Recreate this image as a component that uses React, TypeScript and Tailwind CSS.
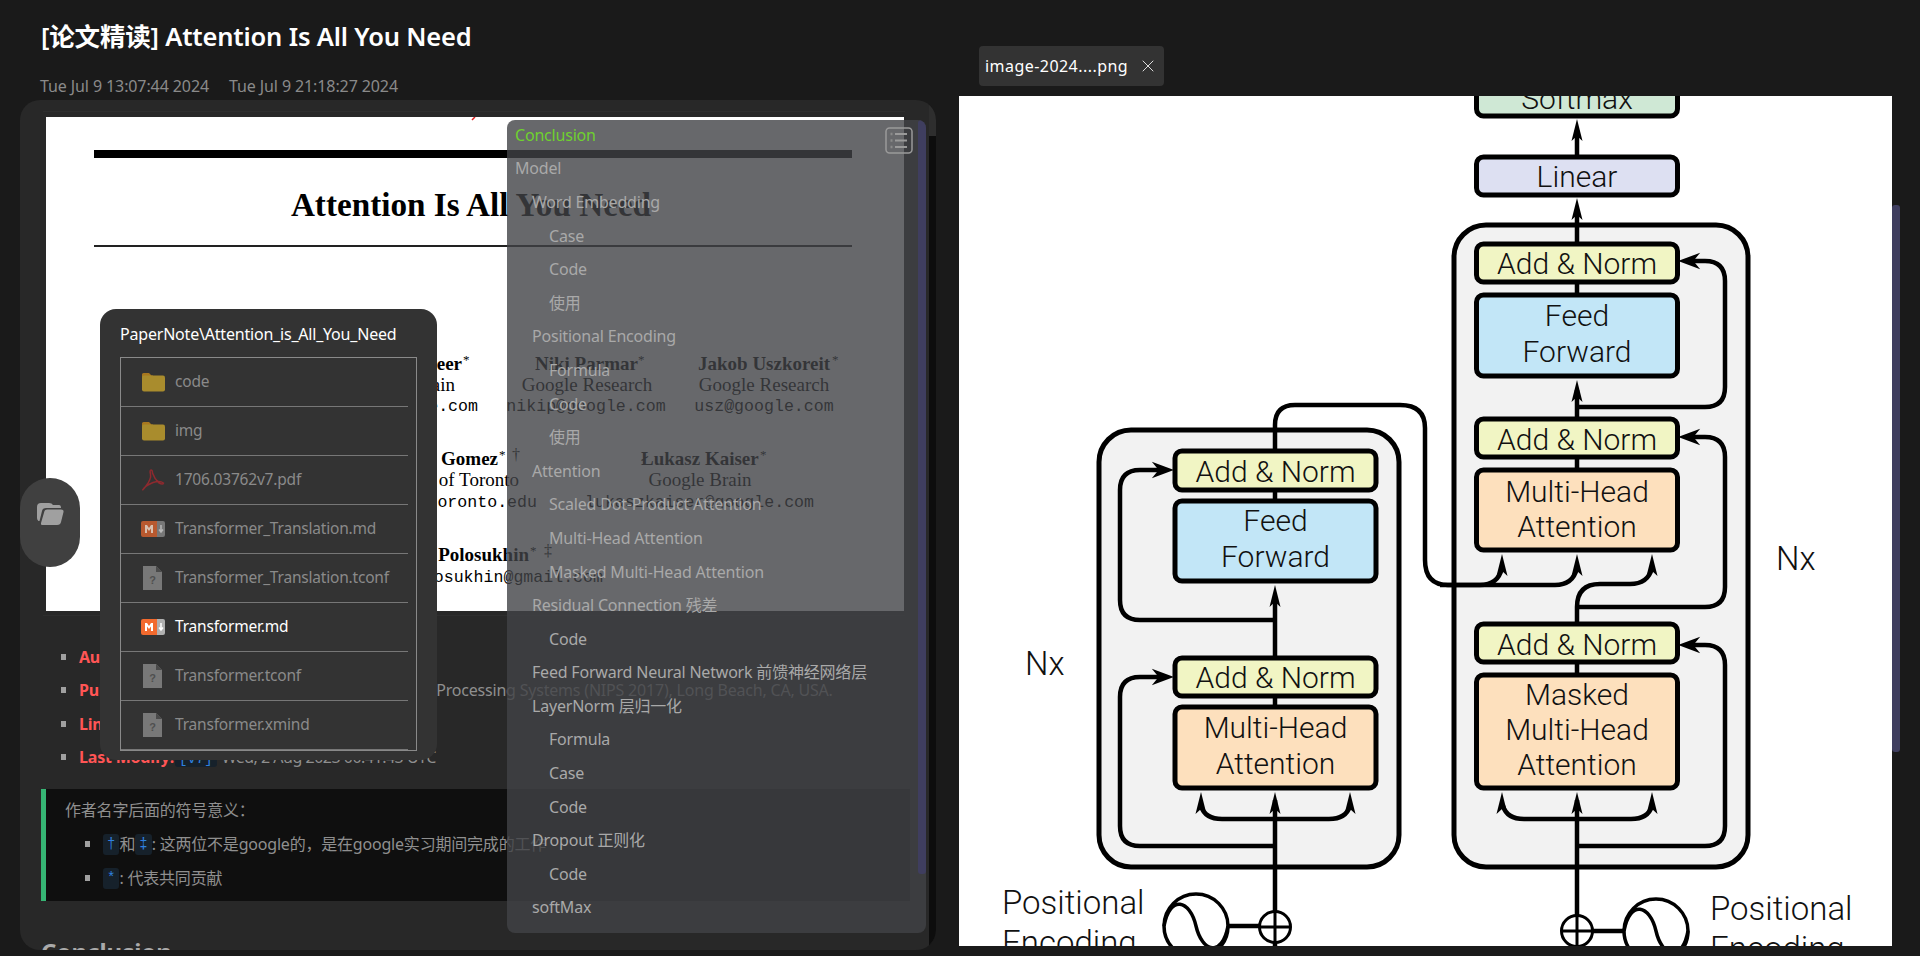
import { X } from 'lucide-react'

const UI_FONT = "font-['Noto_Sans','Noto_Sans_CJK_SC',sans-serif]"
const UI_TEXT = 'text-[16px] tracking-[-0.2px]'

type TocRow = { label: string; level: 1 | 2 | 3; active?: boolean }

const TOC: TocRow[] = [
  { label: 'Conclusion', level: 1, active: true },
  { label: 'Model', level: 1 },
  { label: 'Word Embedding', level: 2 },
  { label: 'Case', level: 3 },
  { label: 'Code', level: 3 },
  { label: '使用', level: 3 },
  { label: 'Positional Encoding', level: 2 },
  { label: 'Formula', level: 3 },
  { label: 'Code', level: 3 },
  { label: '使用', level: 3 },
  { label: 'Attention', level: 2 },
  { label: 'Scaled Dot-Product Attention', level: 3 },
  { label: 'Multi-Head Attention', level: 3 },
  { label: 'Masked Multi-Head Attention', level: 3 },
  { label: 'Residual Connection 残差', level: 2 },
  { label: 'Code', level: 3 },
  { label: 'Feed Forward Neural Network 前馈神经网络层', level: 2 },
  { label: 'LayerNorm 层归一化', level: 2 },
  { label: 'Formula', level: 3 },
  { label: 'Case', level: 3 },
  { label: 'Code', level: 3 },
  { label: 'Dropout 正则化', level: 2 },
  { label: 'Code', level: 3 },
  { label: 'softMax', level: 2 }
]

type FileKind = 'folder' | 'pdf' | 'md' | 'unknown'

const FILES: { name: string; kind: FileKind; active?: boolean }[] = [
  { name: 'code', kind: 'folder' },
  { name: 'img', kind: 'folder' },
  { name: '1706.03762v7.pdf', kind: 'pdf' },
  { name: 'Transformer_Translation.md', kind: 'md' },
  { name: 'Transformer_Translation.tconf', kind: 'unknown' },
  { name: 'Transformer.md', kind: 'md', active: true },
  { name: 'Transformer.tconf', kind: 'unknown' },
  { name: 'Transformer.xmind', kind: 'unknown' }
]

function FileIcon({ kind, active }: { kind: FileKind; active?: boolean }) {
  if (kind === 'folder') {
    return (
      <svg width="24" height="20" viewBox="0 0 24 20">
        <path d="M1 4V2.5Q1 1 2.5 1H8L10.5 3.5H12V6H1Z" fill="#a8781f" />
        <rect x="1" y="3.5" width="23" height="16" rx="2" fill="#a98c2d" />
      </svg>
    )
  }
  if (kind === 'pdf') {
    return (
      <svg width="24" height="24" viewBox="0 0 24 24" fill="none" stroke="#8e2a2f" strokeWidth="1.5">
        <path d="M10 2Q8.5 2 9.5 6Q10.5 11 5 18Q1 23 2 21.5Q4 18 12 14.5Q19 12.5 22.5 15Q22 17 18 15Q13.5 11 11.5 5Q11.5 2 10 2Z" />
      </svg>
    )
  }
  if (kind === 'md') {
    return (
      <svg width="24" height="16" viewBox="0 0 24 16">
        <path d="M2 0H16V16H2Q0 16 0 14V2Q0 0 2 0Z" fill={active ? '#f26a2e' : '#b8592f'} />
        <path d="M16 0H22Q24 0 24 2V14Q24 16 22 16H16Z" fill={active ? '#b0b0b0' : '#777777'} />
        <path d="M4 12V4H6L8 7L10 4H12V12H10V7.5L8 10L6 7.5V12Z" fill={active ? '#ffffff' : '#d8c0b0'} />
        <path d="M20 4V10M18 8.5L20 11L22 8.5" stroke={active ? '#ffffff' : '#b8b8b8'} strokeWidth="1.5" fill="none" />
      </svg>
    )
  }
  return (
    <svg width="24" height="24" viewBox="0 0 24 24">
      <path d="M2 0H15L21 6V24H2Z" fill="#787878" />
      <path d="M15 0L21 6H15Z" fill="#4a4a4a" />
      <text x="11.5" y="18" textAnchor="middle" fontSize="11" fontWeight="700" fill="#4f4f4f" fontFamily="Liberation Sans, sans-serif">
        ?
      </text>
    </svg>
  )
}

function Star({ x, y, mark = '*', size = 13 }: { x: number; y: number; mark?: string; size?: number }) {
  return (
    <text x={x} y={y - 6} fontSize={size} fontWeight="400">
      {mark}
    </text>
  )
}

/** The first page of the paper, as it sits in the note. */
function PaperPage() {
  const serif = 'Liberation Serif, serif'
  const mono = 'Liberation Mono, monospace'
  return (
    <svg width="858" height="494" viewBox="46 117 858 494" className="block bg-white">
      <path d="M472 120L475 117" stroke="#e02020" strokeWidth="1.5" />
      <rect x="94" y="150" width="758" height="8" fill="#000" />
      <rect x="94" y="245" width="758" height="2" fill="#222" />
      <text x="471" y="216" textAnchor="middle" fontFamily={serif} fontWeight="700" fontSize="33.2" fill="#000">
        Attention Is All You Need
      </text>
      <g fontFamily={serif} fontSize="19" fill="#000">
        <g fontWeight="700">
          <text x="462" y="370" textAnchor="end">Noam Shazeer</text>
          <text x="535" y="370">Niki Parmar</text>
          <text x="698" y="370">Jakob Uszkoreit</text>
          <text x="498" y="465" textAnchor="end">Aidan N. Gomez</text>
          <text x="641" y="465">Łukasz Kaiser</text>
          <text x="529" y="561" textAnchor="end">Illia Polosukhin</text>
        </g>
        <Star x={463} y={370} />
        <Star x={638} y={370} />
        <Star x={832} y={370} />
        <Star x={499} y={465} />
        <Star x={512} y={466} mark="†" size={16} />
        <Star x={760} y={465} />
        <Star x={530} y={561} />
        <Star x={544} y={562} mark="‡" size={16} />
        <text x="455" y="391" textAnchor="end">Google Brain</text>
        <text x="587" y="391" textAnchor="middle">Google Research</text>
        <text x="764" y="391" textAnchor="middle">Google Research</text>
        <text x="519" y="486" textAnchor="end">University of Toronto</text>
        <text x="700" y="486" textAnchor="middle">Google Brain</text>
      </g>
      <g fontFamily={mono} fontSize="16.6" fill="#000">
        <text x="478" y="411" textAnchor="end">noam@google.com</text>
        <text x="586" y="411" textAnchor="middle">nikip@google.com</text>
        <text x="764" y="411" textAnchor="middle">usz@google.com</text>
        <text x="537" y="507" textAnchor="end">aidan@cs.toronto.edu</text>
        <text x="814" y="507" textAnchor="end">lukaszkaiser@google.com</text>
        <text x="603" y="582" textAnchor="end">illia.polosukhin@gmail.com</text>
      </g>
    </svg>
  )
}

function Box({ x, y, w = 201, h, fill, lines }: { x: number; y: number; w?: number; h: number; fill: string; lines: [string, number][] }) {
  return (
    <g>
      <rect x={x} y={y} width={w} height={h} rx="7" fill={fill} stroke="#000" strokeWidth="5" />
      {lines.map(([label, base]) => (
        <text key={label} x={x + w / 2} y={base + 1} textAnchor="middle" fontSize="30" fontWeight="300" fill="#111">
          {label}
        </text>
      ))}
    </g>
  )
}

// Arrow head pointing at the tip, with the notch the paper's figure has.
function Up({ x, y }: { x: number; y: number }) {
  return <path d={`M${x} ${y}L${x + 5.5} ${y + 22}L${x} ${y + 17}L${x - 5.5} ${y + 22}Z`} fill="#000" />
}
function Left({ x, y }: { x: number; y: number }) {
  return <path d={`M${x} ${y}L${x + 16} ${y - 6}L${x + 11} ${y}L${x + 16} ${y + 6}Z`} fill="#000" stroke="#000" strokeWidth="2" />
}
function Right({ x, y }: { x: number; y: number }) {
  return <path d={`M${x} ${y}L${x - 16} ${y - 6}L${x - 11} ${y}L${x - 16} ${y + 6}Z`} fill="#000" stroke="#000" strokeWidth="2" />
}

function Wave({ cx, cy }: { cx: number; cy: number }) {
  return (
    <g fill="none" stroke="#000" strokeWidth="3.5">
      <circle cx={cx} cy={cy} r="32" fill="#fff" />
      <path d={`M${cx - 32} ${cy}C${cx - 26} ${cy - 32} ${cx - 6} ${cy - 26} ${cx} ${cy}C${cx + 6} ${cy + 26} ${cx + 26} ${cy + 32} ${cx + 32} ${cy}`} />
    </g>
  )
}

function Plus({ cx, cy }: { cx: number; cy: number }) {
  return (
    <g fill="#fff" stroke="#000" strokeWidth="3">
      <circle cx={cx} cy={cy} r="15.5" />
      <path d={`M${cx - 15} ${cy}H${cx + 15}M${cx} ${cy - 15}V${cy + 15}`} />
    </g>
  )
}

/** The Transformer architecture figure, in page coordinates. */
function TransformerFigure() {
  const add = '#f1f5c4'
  const feed = '#c2e6f7'
  const multi = '#fde0bd'
  const xE = 1275
  const xD = 1577
  return (
    <svg width="933" height="850" viewBox="959 96 933 850" className="block bg-white" fontFamily="Roboto, sans-serif">
      <rect x="1099" y="430" width="300" height="437" rx="32" fill="#f2f2f2" stroke="#000" strokeWidth="5" />
      <rect x="1454" y="225" width="294" height="642" rx="32" fill="#f2f2f2" stroke="#000" strokeWidth="5" />

      <g fill="none" stroke="#000" strokeWidth="4.5">
        {/* encoder */}
        <path d={`M${xE} 911V800M${xE} 656V600M${xE} 499V491`} />
        <path d={`M${xE} 449V425Q${xE} 405 1295 405H1400Q1425 405 1425 428V560Q1425 585 1448 585H1480Q1498 585 1502 568`} />
        <path d="M1440 585H1555Q1573 585 1577 568" />
        <path d={`M${xE} 620H1140Q1120 620 1120 600V490Q1120 470 1140 470H1160`} />
        <path d={`M${xE} 846H1140Q1120 846 1120 826V697Q1120 677 1140 677H1160`} />
        <path d={`M1201 806Q1205 819 1222 819H1329Q1346 819 1350 806`} />
        <path d={`M${xE} 705V697`} />
        {/* decoder */}
        <path d={`M${xD} 916V800M${xD} 673V663M${xD} 468V459M${xD} 293V283`} />
        <path d={`M${xD} 622V607Q${xD} 584 1600 584H1630Q1648 584 1652 568`} />
        <path d={`M${xD} 417V390M${xD} 242V210M${xD} 155V130`} />
        <path d={`M${xD} 846H1705Q1725 846 1725 826V665Q1725 645 1705 645H1690`} />
        <path d={`M${xD} 607H1705Q1725 607 1725 587V457Q1725 437 1705 437H1690`} />
        <path d={`M${xD} 407H1705Q1725 407 1725 387V281Q1725 261 1705 261H1690`} />
        <path d="M1503 806Q1507 819 1524 819H1631Q1648 819 1652 806" />
        {/* inputs */}
        <path d="M1228 926H1259M1593 931H1624" />
        <path d={`M${xE} 942V946`} />
      </g>

      <Up x={xE} y={792} />
      <Up x={1201} y={792} />
      <Up x={1350} y={792} />
      <Up x={xE} y={585} />
      <Up x={1502} y={554} />
      <Up x={xD} y={554} />
      <Up x={1652} y={554} />
      <Up x={xD} y={792} />
      <Up x={1502} y={792} />
      <Up x={1652} y={792} />
      <Up x={xD} y={380} />
      <Up x={xD} y={198} />
      <Up x={xD} y={119} />
      <Right x={1171} y={470} />
      <Right x={1171} y={677} />
      <Left x={1681} y={261} />
      <Left x={1681} y={437} />
      <Left x={1681} y={645} />

      <Box x={1476.5} y={70} h={46} fill="#cfe8d5" lines={[['Softmax', 108]]} />
      <Box x={1476.5} y={157} h={38} fill="#dde0f2" lines={[['Linear', 186]]} />
      <Box x={1476.5} y={244} h={38} fill={add} lines={[['Add & Norm', 273]]} />
      <Box x={1476.5} y={295} h={81} fill={feed} lines={[['Feed', 325], ['Forward', 361]]} />
      <Box x={1476.5} y={419} h={38} fill={add} lines={[['Add & Norm', 449]]} />
      <Box x={1476.5} y={470} h={80} fill={multi} lines={[['Multi-Head', 501], ['Attention', 536]]} />
      <Box x={1476.5} y={624} h={38} fill={add} lines={[['Add & Norm', 654]]} />
      <Box x={1476.5} y={675} h={113} fill={multi} lines={[['Masked', 704], ['Multi-Head', 739], ['Attention', 774]]} />

      <Box x={1175} y={451} h={39} fill={add} lines={[['Add & Norm', 481]]} />
      <Box x={1175} y={501} h={80} fill={feed} lines={[['Feed', 530], ['Forward', 566]]} />
      <Box x={1175} y={658} h={38} fill={add} lines={[['Add & Norm', 687]]} />
      <Box x={1175} y={707} h={81} fill={multi} lines={[['Multi-Head', 737], ['Attention', 773]]} />

      <Plus cx={xE} cy={927} />
      <Plus cx={xD} cy={931} />
      <Wave cx={1196} cy={926} />
      <Wave cx={1656} cy={931} />

      <g fontSize="33" fontWeight="300" fill="#111">
        <text x="1025" y="675">Nx</text>
        <text x="1776" y="570">Nx</text>
        <text x="1002" y="914">Positional</text>
        <text x="1002" y="954">Encoding</text>
        <text x="1710" y="920">Positional</text>
        <text x="1710" y="960">Encoding</text>
      </g>
    </svg>
  )
}

function Chip({ children }: { children: string }) {
  return <code className="rounded-[3px] bg-[#16212b] px-[4px] font-['Liberation_Mono',monospace] text-[14px] tracking-normal text-[#2f81e0]">{children}</code>
}

function NoteBody() {
  const bullet = 'mr-[13px] h-[6px] w-[5px] shrink-0 bg-[#a0a0a0]'
  const key = 'font-bold text-[#ff5555]'
  return (
    <>
      <div className="ml-[23px] mt-[11px] w-[862px] border-y border-[#2e2e2e] pb-[4px] pl-[3px] pt-[5px]">
        <PaperPage />
      </div>

      <ul className={`ml-[41px] mt-[24px] text-[#8f8f8f] ${UI_TEXT}`}>
        <li className="flex h-[33.5px] items-center">
          <span className={bullet} />
          <span className={key}>Authors:</span>
          <span className="ml-1">Ashish Vaswani et al.</span>
        </li>
        <li className="flex h-[33.5px] items-center">
          <span className={bullet} />
          <span className={key}>Publish:</span>
          <span className="ml-[59px] whitespace-nowrap">Advances in Neural Information Processing Systems (NIPS 2017), Long Beach, CA, USA.</span>
        </li>
        <li className="flex h-[33.5px] items-center">
          <span className={bullet} />
          <span className={key}>Link:</span>
          <span className="ml-1">arXiv</span>
        </li>
        <li className="flex h-[33.5px] items-center">
          <span className={bullet} />
          <span className={key}>Last Modify:</span>
          <span className="ml-[1px]">
            <Chip>[v7]</Chip>
          </span>
          <span className="ml-[5px] whitespace-nowrap tracking-[-0.5px]">Wed, 2 Aug 2023 00:41:43 UTC</span>
        </li>
      </ul>

      <blockquote className={`ml-[21px] mt-[15px] h-[112px] w-[869px] border-l-[5px] border-[#36b574] bg-[#0f0f0f] pl-[19px] pt-[4px] text-[#8f8f8f] ${UI_TEXT}`}>
        <p className="flex h-[34px] items-center">作者名字后面的符号意义：</p>
        <p className="ml-[20px] flex h-[34px] items-center whitespace-nowrap">
          <span className={bullet} />
          <Chip>†</Chip>和<Chip>‡</Chip>: 这两位不是google的，是在google实习期间完成的工作
        </p>
        <p className="ml-[20px] flex h-[34px] items-center whitespace-nowrap">
          <span className={bullet} />
          <Chip>*</Chip>: 代表共同贡献
        </p>
      </blockquote>

      <h2 className="ml-[21px] mt-[35px] text-[24px] font-bold leading-[32px] text-[#aaaaaa]">Conclusion</h2>
    </>
  )
}

function TocPanel() {
  const indent = { 1: 'pl-[8px]', 2: 'pl-[25px]', 3: 'pl-[42px]' }
  return (
    <div className={`absolute left-[487px] top-[20px] h-[813px] w-[419px] overflow-hidden rounded-[8px] bg-[rgba(65,66,70,0.8)] ${UI_TEXT}`}>
      <div className="-mt-[2px]">
        {TOC.map((row, i) => (
          <div
            key={i}
            className={`flex h-[33.6px] items-center whitespace-nowrap ${indent[row.level]} ${row.active ? 'text-[#6fd12f]' : 'text-[#a9a9a9]'}`}
          >
            {row.label}
          </div>
        ))}
      </div>
      <div className="absolute right-0 top-0 h-[754px] w-[8px] rounded-[3px] bg-[#3f3e5f]" />
      <svg width="28" height="27" viewBox="0 0 28 27" className="absolute left-[378px] top-[7px]" fill="none" stroke="#9a9a9a" strokeWidth="1.5">
        <rect x="1" y="1" width="26" height="25" rx="3.5" />
        <path d="M10 7H22M10 13.5H22M10 20H22" strokeWidth="2" />
        <path d="M5.5 7H7.5M5.5 13.5H7.5M5.5 20H7.5" strokeWidth="2.5" stroke="#8a8a8a" />
      </svg>
    </div>
  )
}

function FilePopup() {
  return (
    <div className={`absolute left-[100px] top-[309px] h-[451px] w-[337px] rounded-[16px] bg-[#333333] px-[20px] pt-[12px] ${UI_TEXT}`}>
      <div className="flex h-[26px] items-center whitespace-nowrap text-white">PaperNote\Attention_is_All_You_Need</div>
      <div className="mt-[10px] w-[297px] border border-[#8a8a8a] pr-[8px]">
        {FILES.map((file) => (
          <div
            key={file.name}
            className={`flex h-[49px] items-center border-b border-[#777777] pl-[20px] ${file.active ? 'text-white' : 'text-[#8a8a8a]'}`}
          >
            <span className="flex w-[34px] shrink-0">
              <FileIcon kind={file.kind} active={file.active} />
            </span>
            <span className="whitespace-nowrap text-[15.5px]">{file.name}</span>
          </div>
        ))}
      </div>
    </div>
  )
}

export default function App() {
  return (
    <div className={`relative flex h-[956px] w-[1920px] overflow-hidden bg-[#1a1a1a] ${UI_FONT}`}>
      <div className="w-[959px] shrink-0">
        <h1 className="ml-[41px] mt-[20px] text-[25.5px] font-semibold leading-[32px] tracking-[-0.18px] text-white">[论文精读] Attention Is All You Need</h1>
        <div className="ml-[40px] mt-[24px] flex h-[20px] items-center gap-[20px] text-[16px] tracking-[-0.1px] text-[#8a8a8a]">
          <span>Tue Jul 9 13:07:44 2024</span>
          <span>Tue Jul 9 21:18:27 2024</span>
        </div>
        <div className="relative ml-[20px] mt-[4px] h-[850px] w-[916px] overflow-hidden rounded-[20px] bg-[#282828]">
          <NoteBody />
          <div className="absolute inset-y-0 right-0 w-[7px] bg-[#0d0d0d]">
            <div className="h-[36px] bg-[#2e2e2e]" />
          </div>
        </div>
      </div>

      <div className="relative flex-1">
        <div className="ml-[20px] mt-[46px] flex h-[40px] w-[185px] items-center rounded-[4px] bg-[#333333] pl-[6px] text-[16px] tracking-[0.45px] text-white">
          <span className="whitespace-nowrap">image-2024....png</span>
          <X size={20} strokeWidth={1.2} className="ml-auto mr-[6px] text-[#dddddd]" />
        </div>
        <div className="mt-[10px]">
          <TransformerFigure />
        </div>
        <div className="absolute left-[933px] top-[205px] h-[547px] w-[8px] rounded-[3px] bg-[#3f3e5f]" />
      </div>

      {/* overlays on top of the note */}
      <div className="absolute left-[20px] top-[100px] h-[850px] w-[916px]">
        <TocPanel />
      </div>
      <FilePopup />
      <div className="absolute left-[20px] top-[478px] flex h-[89px] w-[60px] items-center justify-center rounded-[30px] bg-[#404040]">
        <svg width="27" height="23" viewBox="0 0 27 23" className="-mt-[17px]">
          <path d="M0 4Q0 0 4 0H12Q15 0 16 2H22Q24 2 24 5H9Q5.5 5 5 8L2.5 18H1.5Q0 17 0 15Z" fill="#a0a0a0" />
          <path d="M7.5 8Q8 6.5 10 6.5H24Q27 6.5 26.5 9L24 19Q23.5 22 20 22H5Q3.5 22 4 20Z" fill="#a0a0a0" />
        </svg>
      </div>
    </div>
  )
}
